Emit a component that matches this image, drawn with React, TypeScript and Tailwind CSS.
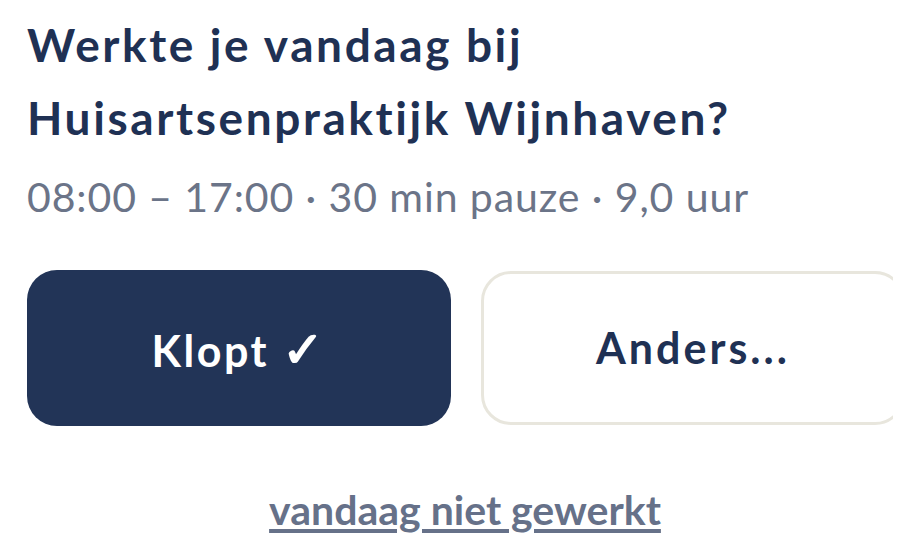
import React from "react";

export default function App() {
  return (
    <div className="w-[920px] h-[558px] bg-white overflow-hidden" style={{ fontFamily: "Lato, 'Noto Sans', sans-serif" }}>
      <div className="w-[893px] overflow-hidden pl-[27px] pt-[8px]">
        <h1 className="text-[46px] leading-[73px] font-bold tracking-[2.6px] text-[#1f3154]">
          Werkte je vandaag bij
          <br />
          Huisartsenpraktijk Wijnhaven?
        </h1>
        <p className="mt-[15px] text-[41px] leading-[56px] tracking-[0.9px] text-[#6b7488]">
          08:00 – 17:00 · 30 min pauze · 9,0 uur
        </p>
        <div className="mt-[45px] flex gap-[30px]">
          <button className="w-[424px] h-[156px] shrink-0 rounded-[30px] bg-[#223457] text-white text-[43px] font-bold tracking-[2.5px]">
            Klopt <span className="text-[50px]">✓</span>
          </button>
          <button className="w-[424px] h-[154px] mt-[1px] shrink-0 rounded-[30px] border-[3px] border-[#e8e6dd] bg-white text-[#1f3154] text-[43px] font-bold tracking-[3px]">
            Anders...
          </button>
        </div>
        <div className="mt-[56px] flex justify-center pl-[10px]">
          <a className="text-[41px] leading-[56px] font-bold text-[#667189] underline decoration-[4px] underline-offset-[4px]">
            vandaag niet gewerkt
          </a>
        </div>
      </div>
    </div>
  );
}
